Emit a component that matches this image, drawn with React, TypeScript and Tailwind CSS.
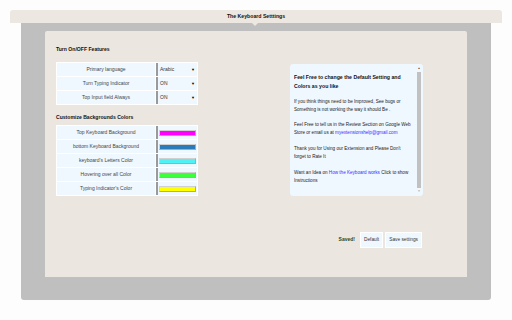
import React from "react";

const font = { fontFamily: '"Liberation Sans", Arial, sans-serif' };

function SelectCell({ value }: { value: string }) {
  return (
    <div className="flex-1 flex items-center justify-between bg-[#f0f8ff] border-l-2 border-[#9a9a9a] pl-[2px] pr-[2px] text-[#333]">
      <span>{value}</span>
      <span className="text-[4px] text-black">▼</span>
    </div>
  );
}

function ColorCell({ color }: { color: string }) {
  return (
    <div className="flex-1 flex items-center bg-[#f0f8ff] border-l-2 border-[#9a9a9a] pl-[1px] pr-[1px]">
      <div className="w-full h-[6px] border border-[#a9a9a9] border-t-[#d0d0d0] border-l-[#d0d0d0]" style={{ backgroundColor: color }} />
    </div>
  );
}

function Row({ label, children }: { label: string; children: React.ReactNode }) {
  return (
    <div className="flex h-[13px] gap-px">
      <div className="w-[98px] flex items-center justify-center bg-[#f0f8ff] text-[#444]">{label}</div>
      {children}
    </div>
  );
}

export default function App() {
  return (
    <div className="w-[512px] h-[320px] bg-[#fdfdfd] pt-[10px]" style={font}>
      <div className="relative mx-[10px] h-[13px] bg-[#ece7e1] rounded-t-[3px] flex items-center justify-center text-[5.2px] font-bold text-[#111]">
        The Keyboard Setttings
        <div className="absolute left-[242px] top-[13px] w-0 h-0 border-l-[3px] border-r-[3px] border-t-[3px] border-l-transparent border-r-transparent border-t-[#ece7e1]" />
      </div>
      <div className="mx-[21px] h-[277px] bg-[#bfbfbf] rounded-b-[3px] pt-[8px] px-[24px]">
        <div className="h-[246px] bg-[#ebe6e0] rounded-t-[2px] flex px-[11px]">
          <div className="w-[142px] pt-[15px] text-[5px]">
            <div className="h-[8px] flex items-center font-bold text-[#111] text-[5.1px]">Turn On/OFF Features</div>
            <div className="mt-[8px] bg-white p-px flex flex-col gap-px">
              <Row label="Primary language"><SelectCell value="Arabic" /></Row>
              <Row label="Turn Typing Indicator"><SelectCell value="ON" /></Row>
              <Row label="Top Input field Always"><SelectCell value="ON" /></Row>
            </div>
            <div className="mt-[9px] h-[8px] flex items-center font-bold text-[#111] text-[5.1px]">Customize Backgrounds Colors</div>
            <div className="mt-[3px] bg-white p-px flex flex-col gap-px">
              <Row label="Top Keyboard Background"><ColorCell color="#ff00ff" /></Row>
              <Row label="bottom Keyboard Background"><ColorCell color="#2b7bba" /></Row>
              <Row label="keyboard's Letters Color"><ColorCell color="#50f2f5" /></Row>
              <Row label="Hovering over all Color"><ColorCell color="#3cff3c" /></Row>
              <Row label="Typing Indicator's Color"><ColorCell color="#ffff00" /></Row>
            </div>
          </div>
          <div className="ml-[92px] w-[133px] pt-[33px] flex flex-col">
            <div className="h-[132px] bg-[#f0f8ff] rounded-[3px] flex">
              <div className="flex-1 pl-[4px] pr-[2px] pt-[9px] text-[4.6px] leading-[8px] text-[#222] whitespace-nowrap">
                <div className="font-bold text-[5.2px] leading-[9px] text-[#111]">Feel Free to change the Default Setting and<br />Colors as you like</div>
                <p className="mt-[7px]">If you think things need to be Improved, See bugs or<br />Something is not working the way it should Be .</p>
                <p className="mt-[7px]">Feel Free to tell us in the Review Section on Google Web<br />Store or email us at <span className="text-[#3a2cff]">myextensionshelp@gmail.com</span></p>
                <p className="mt-[8px]">Thank you for Using our Extension and Please Don't<br />forget to Rate It</p>
                <p className="mt-[8px]">Want an Idea on <span className="text-[#3a2cff]">How the Keyboard works</span> Click to show<br />Instructions</p>
              </div>
              <div className="w-[6px] flex flex-col items-center mr-px py-[3px]">
                <div className="text-[3px] leading-[3px] text-[#555]">▲</div>
                <div className="flex-1 w-[4px] bg-[#c1c1c1] my-[2px]" />
                <div className="text-[3px] leading-[3px] text-[#aaa]">▼</div>
              </div>
            </div>
            <div className="mt-[36px] flex items-center justify-end gap-[2px] pr-px text-[4.8px]">
              <span className="font-bold text-[#1d4a2c] text-[5px] mr-[3px]">Saved!</span>
              <div className="h-[16px] px-[3px] flex items-center bg-[#f0f8ff] border border-white text-[#333]">Default</div>
              <div className="h-[16px] px-[3px] flex items-center bg-[#f0f8ff] border border-white text-[#333]">Save settings</div>
            </div>
          </div>
        </div>
      </div>
    </div>
  );
}
